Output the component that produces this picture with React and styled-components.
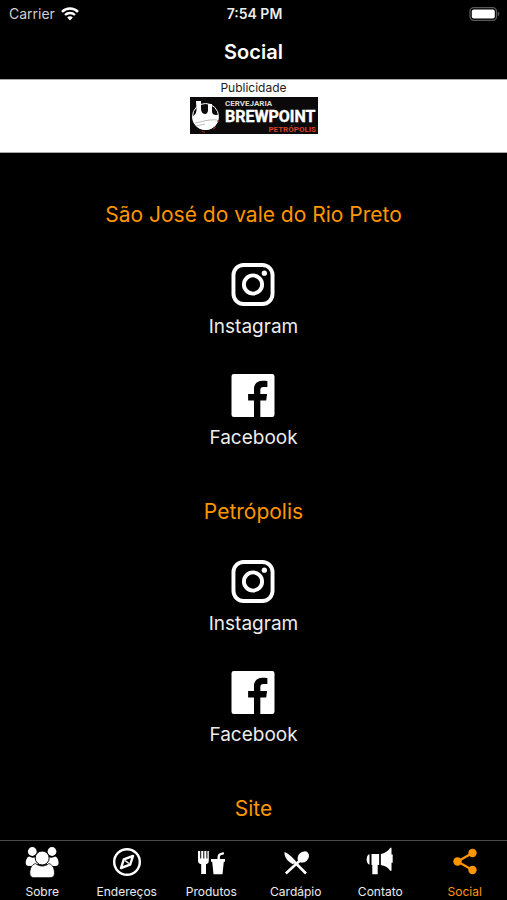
import React from "react";
import styled, { createGlobalStyle } from "styled-components";

const colors = {
  black: "#000000",
  white: "#ffffff",
  orange: "#ff9500",
  text: "#ececec",
  line: "#4a4a4c"
};

const GlobalStyle = createGlobalStyle`
  * {
    box-sizing: border-box;
  }

  body {
    margin: 0;
    background: ${colors.black};
    font-family: Inter, "Liberation Sans", sans-serif;
  }
`;

const Screen = styled.div`
  display: flex;
  flex-direction: column;
  height: 100vh;
  background: ${colors.black};
  color: ${colors.text};
`;

const StatusBar = styled.div`
  display: grid;
  grid-template-columns: 1fr auto 1fr;
  align-items: center;
  height: 27px;
  padding: 0 7px 0 9px;
  font-size: 14px;
`;

const Carrier = styled.div`
  display: flex;
  align-items: center;
  gap: 6px;
  color: #cfcfcf;
`;

const Time = styled.div`
  font-weight: 600;
`;

const Battery = styled.svg`
  justify-self: end;
`;

const Header = styled.header`
  padding: 13px 0 15px;
  text-align: center;
`;

const Title = styled.h1`
  margin: 0;
  font-size: 20px;
  line-height: 24px;
  font-weight: 600;
  color: ${colors.white};
`;

const Banner = styled.aside`
  display: flex;
  flex-direction: column;
  align-items: center;
  gap: 2px;
  padding-bottom: 18px;
  border-top: 1px solid #a8a8a8;
  border-bottom: 1px solid #a8a8a8;
  background: ${colors.white};
  color: #1c1c1c;
  font-size: 12px;
  line-height: 15px;
`;

const BannerLink = styled.a`
  display: block;

  svg {
    display: block;
  }
`;

const Content = styled.main`
  flex: 1;
  min-height: 0;
  padding-top: 49px;
  overflow: hidden auto;
  scrollbar-width: none;
`;

const Section = styled.section`
  display: flex;
  flex-direction: column;
  align-items: center;
  gap: 35px;
  margin-bottom: 49px;
`;

const SectionTitle = styled.h2`
  margin: 0;
  font-size: 21px;
  line-height: 26px;
  font-weight: 400;
  color: ${colors.orange};
`;

const SocialLink = styled.a`
  display: flex;
  flex-direction: column;
  align-items: center;
  gap: 9px;
  font-size: 19px;
  line-height: 24px;
  color: ${colors.text};
  text-decoration: none;
`;

const TabBar = styled.nav`
  display: flex;
  border-top: 1px solid ${colors.line};
`;

const Tab = styled.button`
  display: flex;
  flex: 1 1 0;
  flex-direction: column;
  align-items: center;
  gap: 6px;
  min-width: 0;
  padding: 5px 0 1px;
  border: 0;
  background: none;
  font-family: inherit;
  font-size: 12px;
  line-height: 15px;
  color: ${props => (props.$active ? colors.orange : colors.text)};

  svg {
    color: ${props => (props.$active ? colors.orange : colors.white)};
  }
`;

const WifiIcon = () => (
  <svg width="18" height="14" viewBox="0 0 18 14" fill="none" stroke="#fff" aria-hidden="true">
    <path d="M1 4.8a11.4 11.4 0 0 1 16 0" strokeWidth="2.5" />
    <path d="M4 8a7.2 7.2 0 0 1 10 0" strokeWidth="2.3" />
    <path d="M6.2 10.4a3.8 3.8 0 0 1 5.6 0L9 13.4Z" fill="#fff" stroke="none" />
  </svg>
);

const BatteryIcon = () => (
  <Battery width="31" height="14" viewBox="0 0 31 14" aria-hidden="true">
    <rect x="1" y="0.7" width="26.5" height="12.6" rx="3.8" fill="none" stroke="#59595b" strokeWidth="1.3" />
    <rect x="2.8" y="2.5" width="23" height="9" rx="2" fill="#fff" />
    <path d="M28.8 4.8c2 .7 2 3.7 0 4.4Z" fill="#59595b" />
  </Battery>
);

const BrewpointLogo = () => (
  <svg width="128" height="37" viewBox="0 0 128 37" role="img" aria-label="Cervejaria Brewpoint Petrópolis">
    <rect width="128" height="37" fill="#0b0909" />
    <circle cx="15.5" cy="19.5" r="13" fill="none" stroke="#fff" strokeWidth="1" />
    <path d="M6 4h5v8c0 3 2 5 4 5s3-2 3-4V7h4v7c0 4 3 4 6 4 2 8-4 15-12.500 15C8 33 2 27 2.500 19.500c3-2 4-4 4-7Z" fill="#fff" />
    <path d="M5 26c7-1 13-4 22-3M6 29l9-2" fill="none" stroke="#999" strokeWidth="0.7" />
    <path d="M12 34.500l3 .8M23 32l3-2M28 25v-2" stroke="#b3291c" strokeWidth="1" />
    <g fontFamily="Roboto, 'Liberation Sans', sans-serif" fontWeight="700">
      <text x="35" y="9" fontSize="8" fill="#ddd">CERVEJARIA</text>
      <text x="35" y="25" fontSize="16" fill="#fff" stroke="#fff" strokeWidth="0.4">BREWPOINT</text>
      <text x="126" y="35" fontSize="8" fill="#d8402a" textAnchor="end">PETRÓPOLIS</text>
    </g>
  </svg>
);

const InstagramIcon = () => (
  <svg width="44" height="43" viewBox="0 0 44 44" fill="none" stroke="#fff" strokeWidth="4" aria-hidden="true">
    <rect x="2" y="2" width="40" height="40" rx="10.500" />
    <circle cx="22" cy="22" r="9.300" />
    <circle cx="33.600" cy="10.400" r="2.700" fill="#fff" stroke="none" />
  </svg>
);

const FacebookIcon = () => (
  <svg width="44" height="43" viewBox="0 0 44 44" aria-hidden="true">
    <path
      fill="#fff"
      d="M2.400 0h39.200A2.400 2.400 0 0 1 44 2.400v39.200a2.400 2.400 0 0 1-2.400 2.400H29.500V27h6l.9-6.500h-6.900v-4.200c0-2 .8-3 3.200-3h4V7.200c-.8-.2-2.800-.4-5-.4-5.400 0-8.700 3.200-8.700 8.700v5h-6V27h6v17H2.400A2.400 2.400 0 0 1 0 41.600V2.400A2.400 2.400 0 0 1 2.400 0Z"
    />
  </svg>
);

const TabSvg = ({ children }) => (
  <svg width="34" height="32" viewBox="0 0 34 32" fill="currentColor" aria-hidden="true">
    {children}
  </svg>
);

const PeopleIcon = () => (
  <TabSvg>
    <circle cx="7.300" cy="5.500" r="4.400" />
    <circle cx="27" cy="5.500" r="4.400" />
    <path d="M4 10.500c2.300 1.500 5 1.500 7.200.2.200 3.200 1.300 5.300 3.100 7-2.500.2-4.500.9-5.800 2.300H4c-2.200 0-3.300-1-3.300-3 0-2.700.9-5.400 3.300-6.500ZM30.300 10.500c-2.300 1.500-5 1.500-7.200.2-.2 3.200-1.300 5.300-3.100 7 2.500.2 4.500.9 5.800 2.300h4.500c2.200 0 3.300-1 3.300-3 0-2.700-.9-5.400-3.300-6.500Z" />
    <circle cx="17.200" cy="12" r="7" stroke="#000" strokeWidth="1" />
    <path d="M10.500 17.600c4 3.200 9.300 3.200 13.300 0 4.100.8 5.700 5.400 5.700 9.600 0 3-1.700 4.500-4.500 4.500H9.300c-2.800 0-4.500-1.500-4.500-4.500 0-4.200 1.700-8.800 5.700-9.600Z" stroke="#000" strokeWidth="0.800" />
  </TabSvg>
);

const CompassIcon = () => (
  <TabSvg>
    <g fill="none" stroke="currentColor" strokeWidth="2.400">
      <circle cx="17" cy="16" r="12.800" />
      <path d="M23 10l-2.800 8.700L11 22l2.800-8.700Z" strokeLinejoin="round" />
      <path d="M15 14.500l4 3" strokeWidth="1.500" />
    </g>
  </TabSvg>
);

const FoodIcon = () => (
  <TabSvg>
    <path d="M4 5h2.200v7.500h1V5h2.100v7.500h1V5h2.100v7.500h1V5h1.400v9.500c0 2.200-1 3.300-2.800 3.800V28H7.200V18.300C5 17.800 4 16.700 4 14.500Z" />
    <path d="M17 13h6.500v-1.800c0-2.500 1-3.700 3.200-4.300l2.800-.9.700 2.200-2.600.8c-1.200.4-1.700.9-1.700 2.200V13H31v2.800h-1.200L28.500 28.300h-9L18.200 15.800H17Z" />
  </TabSvg>
);

const MenuIcon = () => (
  <TabSvg>
    <path d="M5.500 6c3 .7 8 5.500 11.300 9.300L14 18.200C9 16 5 11 5.500 6Z" />
    <ellipse cx="24.300" cy="11" rx="6.300" ry="5" transform="rotate(-43 24.300 11)" />
    <path d="M21 14.500L6.800 27.500M15.500 16l11.500 11.500" fill="none" stroke="currentColor" strokeWidth="2.600" />
  </TabSvg>
);

const MegaphoneIcon = () => (
  <TabSvg>
    <path d="M6.500 8.300v10.400C2.700 18 2.700 9 6.500 8.300ZM8.500 8h7.800v11h-1.600v9.200H9.300V19h-.8ZM17.800 8c4-.5 7.600-3 9.400-6.200h1.300v6.800h1.200v8.200h-1.200v8h-1.300C25 21.500 21.800 19.500 17.800 19Z" />
    <path d="M16.900 8v11" stroke="#000" strokeWidth="0.800" />
  </TabSvg>
);

const ShareIcon = () => (
  <TabSvg>
    <circle cx="9.500" cy="15.500" r="4.200" />
    <circle cx="24.500" cy="7" r="4.200" />
    <circle cx="24.500" cy="24" r="4.200" />
    <path d="M24.500 7L9.500 15.500l15 8.500" fill="none" stroke="currentColor" strokeWidth="2.200" />
  </TabSvg>
);

const networks = [
  { label: "Instagram", Icon: InstagramIcon },
  { label: "Facebook", Icon: FacebookIcon }
];

const sections = [
  { title: "São José do vale do Rio Preto", links: networks },
  { title: "Petrópolis", links: networks },
  { title: "Site", links: [] }
];

const tabs = [
  { label: "Sobre", Icon: PeopleIcon },
  { label: "Endereços", Icon: CompassIcon },
  { label: "Produtos", Icon: FoodIcon },
  { label: "Cardápio", Icon: MenuIcon },
  { label: "Contato", Icon: MegaphoneIcon },
  { label: "Social", Icon: ShareIcon, active: true }
];

const App = () => (
  <Screen>
    <GlobalStyle />
    <StatusBar>
      <Carrier>
        Carrier
        <WifiIcon />
      </Carrier>
      <Time>7:54 PM</Time>
      <BatteryIcon />
    </StatusBar>
    <Header>
      <Title>Social</Title>
    </Header>
    <Banner>
      Publicidade
      <BannerLink href="#brewpoint">
        <BrewpointLogo />
      </BannerLink>
    </Banner>
    <Content>
      {sections.map(({ title, links }) => (
        <Section key={title}>
          <SectionTitle>{title}</SectionTitle>
          {links.map(({ label, Icon }) => (
            <SocialLink key={label} href={`#${label.toLowerCase()}`}>
              <Icon />
              {label}
            </SocialLink>
          ))}
        </Section>
      ))}
    </Content>
    <TabBar>
      {tabs.map(({ label, Icon, active }) => (
        <Tab key={label} type="button" $active={active} aria-current={active ? "page" : undefined}>
          <Icon />
          {label}
        </Tab>
      ))}
    </TabBar>
  </Screen>
);

export default App;
